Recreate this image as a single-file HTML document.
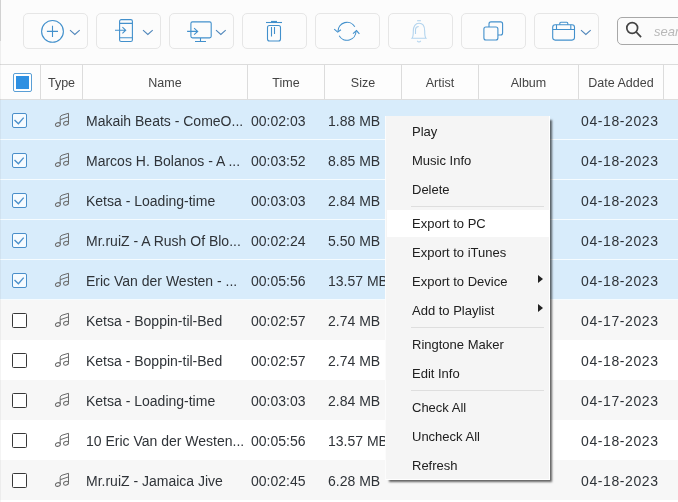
<!DOCTYPE html>
<html><head><meta charset="utf-8">
<style>
html,body{margin:0;padding:0;}
body{width:678px;height:502px;overflow:hidden;position:relative;background:#fff;font-family:"Liberation Sans",sans-serif;}
.tb{position:absolute;left:0;top:0;width:678px;height:64px;background:#fcfcfc;}
.edge{position:absolute;left:0;top:0;width:1px;height:41px;background:#d2d2d2;}.edge2{position:absolute;left:0;top:41px;width:1px;height:23px;background:#eeeeee;}
.btn{position:absolute;top:13px;width:65px;height:36px;border:1px solid #e6e6e6;border-radius:5px;background:#fcfcfc;box-sizing:border-box;}
.btn svg{position:absolute;left:-2px;top:-2px;}
.search{position:absolute;left:617px;top:17px;width:80px;height:28px;border:1px solid #a8a8a8;border-radius:5px;background:#fbfbfb;box-sizing:border-box;}
.search span{position:absolute;left:36px;top:6px;font-size:13px;font-style:italic;color:#b8b8b8;}
.hdr{position:absolute;left:0;top:64px;width:678px;height:36px;background:#fdfdfd;border-top:1px solid #dcdcdc;border-bottom:1px solid #dedede;box-sizing:border-box;}
.hc{position:absolute;top:0;height:34px;line-height:36px;text-align:center;font-size:12.5px;color:#444;border-right:1px solid #dcdcdc;box-sizing:border-box;}
.row{position:absolute;left:0;width:678px;height:40px;}
.sel{background:#d8ecfb;border-bottom:1px solid #f6fcff;box-sizing:border-box;}
.gry{background:#f7f7f7;}
.wht{background:#fff;}
.c{position:absolute;top:1px;height:40px;line-height:40px;font-size:14px;color:#2f3338;white-space:nowrap;overflow:hidden;}
.cb{position:absolute;left:12px;top:13px;width:15px;height:15px;box-sizing:border-box;border-radius:2px;}
.cbs{border:1.3px solid #4a8fca;background:#f5fbff;}
.cbu{border:1.4px solid #383838;background:#fff;border-radius:1.5px;}
.cb svg{position:absolute;left:-1.3px;top:-1.3px;}
.note{position:absolute;left:54px;top:12px;}
.menu{position:absolute;left:385px;top:116px;width:165px;height:364px;background:#f5f5f5;border-left:1px solid #fcfcfc;border-right:1px solid #fff;border-bottom:1px solid #fff;box-sizing:border-box;box-shadow:3px 3px 2px -1px rgba(0,0,0,0.6);}
.hlb{position:absolute;left:1px;top:94px;width:162px;height:27px;background:#fff;}
.mi{position:absolute;left:-1px;width:165px;height:29px;line-height:29px;font-size:13px;color:#202020;}
.mi span{position:absolute;left:27px;top:0;}
.mi.hl{background:#fff;}
.sep{position:absolute;left:25px;width:133px;height:1px;background:#dedede;}
.arr{position:absolute;left:153px;top:8.7px;width:0;height:0;border-left:5.2px solid #222;border-top:4.8px solid transparent;border-bottom:4.8px solid transparent;}
.tb,.hdr,.row,.menu{will-change:transform;}</style></head><body>
<div class="tb">
  <div class="edge"></div><div class="edge2"></div>
  <div class="btn" style="left:23px;"><svg width="65" height="36" viewBox="0 0 65 36"><g fill="none" stroke="#4290cc" stroke-width="1.1"><circle cx="30.5" cy="19.4" r="10.9"/><path d="M24.9 19.4H36M30.5 13.8V25"/><path d="M48 18.2l4.85 4.2 4.85-4.2" stroke="#4f86bb"/></g></svg></div>
  <div class="btn" style="left:96px;"><svg width="65" height="36" viewBox="0 0 65 36"><g fill="none" stroke="#4290cc" stroke-width="1.1"><rect x="24.6" y="7.6" width="12.8" height="21.9" rx="1.6"/><path d="M24.6 11.4h12.8M24.6 25.8h12.8"/><path d="M20 18.2h10.9M27.4 15.2l3.3 3 -3.3 3.2"/><path d="M48 18.2l4.85 4.2 4.85-4.2" stroke="#4f86bb"/></g></svg></div>
  <div class="btn" style="left:169px;"><svg width="65" height="36" viewBox="0 0 65 36"><g fill="none" stroke="#4290cc" stroke-width="1.1"><rect x="22.9" y="9.9" width="20.3" height="16" rx="1.6"/><path d="M32.5 26v3.5M27 29.5h11"/><path d="M19.1 19.4h10.8M26.1 16.1l3.6 3.3-3.6 3.2"/><path d="M48 18.2l4.85 4.2 4.85-4.2" stroke="#4f86bb"/></g></svg></div>
  <div class="btn" style="left:242px;"><svg width="65" height="36" viewBox="0 0 65 36"><g fill="none" stroke="#4290cc" stroke-width="1.1"><path d="M25 10.5h16"/><rect x="30" y="8.9" width="6" height="1.6" fill="#4290cc" stroke="none"/><rect x="26.5" y="13.5" width="13" height="15.5" rx="2"/><path d="M30.5 15v9.5M33.5 15v7"/></g></svg></div>
  <div class="btn" style="left:315px;"><svg width="65" height="36" viewBox="0 0 65 36"><g fill="none" stroke="#4290cc" stroke-width="1.1"><path d="M40.8 14.8A9 9 0 0 0 24 19.3"/><path d="M20.2 17.1l3.5 3 3.2-2.4"/><path d="M25.2 23.8A9 9 0 0 0 42 19.3"/><path d="M39 21.6l3.5-3 2.9 3.2"/></g></svg></div>
  <div class="btn" style="left:388px;"><svg width="65" height="36" viewBox="0 0 65 36"><g fill="none" stroke="#b3d4ee" stroke-width="1.1"><path d="M30.1 8.7h3.8"/><path d="M25 26.3C26.2 25 26.3 23 26.3 19C26.3 14.2 28.5 11.3 32 11.3C35.5 11.3 37.7 14.2 37.7 19C37.7 23 37.8 25 39 26.3Z"/><path d="M28.5 22.1V17.5C28.5 16 29.8 14.7 31.7 14.5"/><path d="M30.2 28.9Q32 31.2 33.8 28.9"/></g></svg></div>
  <div class="btn" style="left:461px;"><svg width="65" height="36" viewBox="0 0 65 36"><g fill="none" stroke="#4290cc" stroke-width="1.1"><rect x="23.9" y="15" width="14" height="13" rx="2"/><path d="M29 15V11.9a2 2 0 0 1 2-2h9.6a2 2 0 0 1 2 2V21a2 2 0 0 1-2 2H38"/></g></svg></div>
  <div class="btn" style="left:534px;"><svg width="65" height="36" viewBox="0 0 65 36"><g fill="none" stroke="#4290cc" stroke-width="1.1"><rect x="19.7" y="12.7" width="21.8" height="15.4" rx="2.5"/><path d="M19.7 17.5h21.8M23.5 12.7v4.8M37.8 12.7v4.8"/><path d="M26.8 12.7V11.2a1 1 0 0 1 1-1h6a1 1 0 0 1 1 1v1.5"/><path d="M48 18.2l4.85 4.2 4.85-4.2" stroke="#4f86bb"/></g></svg></div>
  <div class="search"><svg width="30" height="28" viewBox="0 0 30 28" style="position:absolute;left:0;top:0"><g fill="none" stroke="#444" stroke-width="1.7"><circle cx="14.2" cy="10" r="5.4"/><path d="M18.1 13.9l5 5.2"/></g></svg><span>search</span></div>
</div>
<div class="hdr">
  <div class="hc" style="left:0;width:41px;"><div class="cb" style="left:13px;top:8px;width:19px;height:19px;border:1.5px solid #5a9fd6;background:#fff;border-radius:2px"><div style="position:absolute;left:1.5px;top:1.5px;width:13px;height:13px;background:#2e90e2"></div></div></div>
  <div class="hc" style="left:41px;width:42px;">Type</div>
  <div class="hc" style="left:83px;width:165px;">Name</div>
  <div class="hc" style="left:248px;width:77px;">Time</div>
  <div class="hc" style="left:325px;width:77px;">Size</div>
  <div class="hc" style="left:402px;width:77px;">Artist</div>
  <div class="hc" style="left:479px;width:100px;">Album</div>
  <div class="hc" style="left:579px;width:85px;">Date Added</div>
</div>
<div id="rows">
<div class="row sel" style="top:100px"><div class="cb cbs"><svg width="15" height="15" viewBox="0 0 15 15"><path d="M2.5 7L6.4 10.8L11.7 4.6" fill="none" stroke="#4a8fca" stroke-width="1.4"/></svg></div><svg class="note" width="16" height="16" viewBox="0 0 16 16"><g fill="none" stroke="#6a6a6a" stroke-width="1"><ellipse cx="3.9" cy="12.5" rx="2.5" ry="1.75" transform="rotate(-15 3.9 12.5)"/><ellipse cx="12" cy="11.3" rx="2.5" ry="1.85" transform="rotate(-15 12 11.3)"/><path d="M6.2 12V5.6Q6.2 3.7 8.1 3.2L14.5 1.3V11.3"/><path d="M6.2 7.7L14.5 4.9"/></g></svg><div class="c" style="left:86px;width:160px">Makaih Beats - ComeO...</div><div class="c" style="left:251px">00:02:03</div><div class="c" style="left:328px">1.88 MB</div><div class="c" style="left:581px;letter-spacing:0.6px">04-18-2023</div></div>
<div class="row sel" style="top:140px"><div class="cb cbs"><svg width="15" height="15" viewBox="0 0 15 15"><path d="M2.5 7L6.4 10.8L11.7 4.6" fill="none" stroke="#4a8fca" stroke-width="1.4"/></svg></div><svg class="note" width="16" height="16" viewBox="0 0 16 16"><g fill="none" stroke="#6a6a6a" stroke-width="1"><ellipse cx="3.9" cy="12.5" rx="2.5" ry="1.75" transform="rotate(-15 3.9 12.5)"/><ellipse cx="12" cy="11.3" rx="2.5" ry="1.85" transform="rotate(-15 12 11.3)"/><path d="M6.2 12V5.6Q6.2 3.7 8.1 3.2L14.5 1.3V11.3"/><path d="M6.2 7.7L14.5 4.9"/></g></svg><div class="c" style="left:86px;width:160px">Marcos H. Bolanos - A ...</div><div class="c" style="left:251px">00:03:52</div><div class="c" style="left:328px">8.85 MB</div><div class="c" style="left:581px;letter-spacing:0.6px">04-18-2023</div></div>
<div class="row sel" style="top:180px"><div class="cb cbs"><svg width="15" height="15" viewBox="0 0 15 15"><path d="M2.5 7L6.4 10.8L11.7 4.6" fill="none" stroke="#4a8fca" stroke-width="1.4"/></svg></div><svg class="note" width="16" height="16" viewBox="0 0 16 16"><g fill="none" stroke="#6a6a6a" stroke-width="1"><ellipse cx="3.9" cy="12.5" rx="2.5" ry="1.75" transform="rotate(-15 3.9 12.5)"/><ellipse cx="12" cy="11.3" rx="2.5" ry="1.85" transform="rotate(-15 12 11.3)"/><path d="M6.2 12V5.6Q6.2 3.7 8.1 3.2L14.5 1.3V11.3"/><path d="M6.2 7.7L14.5 4.9"/></g></svg><div class="c" style="left:86px;width:160px">Ketsa - Loading-time</div><div class="c" style="left:251px">00:03:03</div><div class="c" style="left:328px">2.84 MB</div><div class="c" style="left:581px;letter-spacing:0.6px">04-18-2023</div></div>
<div class="row sel" style="top:220px"><div class="cb cbs"><svg width="15" height="15" viewBox="0 0 15 15"><path d="M2.5 7L6.4 10.8L11.7 4.6" fill="none" stroke="#4a8fca" stroke-width="1.4"/></svg></div><svg class="note" width="16" height="16" viewBox="0 0 16 16"><g fill="none" stroke="#6a6a6a" stroke-width="1"><ellipse cx="3.9" cy="12.5" rx="2.5" ry="1.75" transform="rotate(-15 3.9 12.5)"/><ellipse cx="12" cy="11.3" rx="2.5" ry="1.85" transform="rotate(-15 12 11.3)"/><path d="M6.2 12V5.6Q6.2 3.7 8.1 3.2L14.5 1.3V11.3"/><path d="M6.2 7.7L14.5 4.9"/></g></svg><div class="c" style="left:86px;width:160px">Mr.ruiZ - A Rush Of Blo...</div><div class="c" style="left:251px">00:02:24</div><div class="c" style="left:328px">5.50 MB</div><div class="c" style="left:581px;letter-spacing:0.6px">04-18-2023</div></div>
<div class="row sel" style="top:260px"><div class="cb cbs"><svg width="15" height="15" viewBox="0 0 15 15"><path d="M2.5 7L6.4 10.8L11.7 4.6" fill="none" stroke="#4a8fca" stroke-width="1.4"/></svg></div><svg class="note" width="16" height="16" viewBox="0 0 16 16"><g fill="none" stroke="#6a6a6a" stroke-width="1"><ellipse cx="3.9" cy="12.5" rx="2.5" ry="1.75" transform="rotate(-15 3.9 12.5)"/><ellipse cx="12" cy="11.3" rx="2.5" ry="1.85" transform="rotate(-15 12 11.3)"/><path d="M6.2 12V5.6Q6.2 3.7 8.1 3.2L14.5 1.3V11.3"/><path d="M6.2 7.7L14.5 4.9"/></g></svg><div class="c" style="left:86px;width:160px">Eric Van der Westen - ...</div><div class="c" style="left:251px">00:05:56</div><div class="c" style="left:328px">13.57 MB</div><div class="c" style="left:581px;letter-spacing:0.6px">04-18-2023</div></div>
<div class="row gry" style="top:300px"><div class="cb cbu"></div><svg class="note" width="16" height="16" viewBox="0 0 16 16"><g fill="none" stroke="#6a6a6a" stroke-width="1"><ellipse cx="3.9" cy="12.5" rx="2.5" ry="1.75" transform="rotate(-15 3.9 12.5)"/><ellipse cx="12" cy="11.3" rx="2.5" ry="1.85" transform="rotate(-15 12 11.3)"/><path d="M6.2 12V5.6Q6.2 3.7 8.1 3.2L14.5 1.3V11.3"/><path d="M6.2 7.7L14.5 4.9"/></g></svg><div class="c" style="left:86px;width:160px">Ketsa - Boppin-til-Bed</div><div class="c" style="left:251px">00:02:57</div><div class="c" style="left:328px">2.74 MB</div><div class="c" style="left:581px;letter-spacing:0.6px">04-17-2023</div></div>
<div class="row wht" style="top:340px"><div class="cb cbu"></div><svg class="note" width="16" height="16" viewBox="0 0 16 16"><g fill="none" stroke="#6a6a6a" stroke-width="1"><ellipse cx="3.9" cy="12.5" rx="2.5" ry="1.75" transform="rotate(-15 3.9 12.5)"/><ellipse cx="12" cy="11.3" rx="2.5" ry="1.85" transform="rotate(-15 12 11.3)"/><path d="M6.2 12V5.6Q6.2 3.7 8.1 3.2L14.5 1.3V11.3"/><path d="M6.2 7.7L14.5 4.9"/></g></svg><div class="c" style="left:86px;width:160px">Ketsa - Boppin-til-Bed</div><div class="c" style="left:251px">00:02:57</div><div class="c" style="left:328px">2.74 MB</div><div class="c" style="left:581px;letter-spacing:0.6px">04-18-2023</div></div>
<div class="row gry" style="top:380px"><div class="cb cbu"></div><svg class="note" width="16" height="16" viewBox="0 0 16 16"><g fill="none" stroke="#6a6a6a" stroke-width="1"><ellipse cx="3.9" cy="12.5" rx="2.5" ry="1.75" transform="rotate(-15 3.9 12.5)"/><ellipse cx="12" cy="11.3" rx="2.5" ry="1.85" transform="rotate(-15 12 11.3)"/><path d="M6.2 12V5.6Q6.2 3.7 8.1 3.2L14.5 1.3V11.3"/><path d="M6.2 7.7L14.5 4.9"/></g></svg><div class="c" style="left:86px;width:160px">Ketsa - Loading-time</div><div class="c" style="left:251px">00:03:03</div><div class="c" style="left:328px">2.84 MB</div><div class="c" style="left:581px;letter-spacing:0.6px">04-17-2023</div></div>
<div class="row wht" style="top:420px"><div class="cb cbu"></div><svg class="note" width="16" height="16" viewBox="0 0 16 16"><g fill="none" stroke="#6a6a6a" stroke-width="1"><ellipse cx="3.9" cy="12.5" rx="2.5" ry="1.75" transform="rotate(-15 3.9 12.5)"/><ellipse cx="12" cy="11.3" rx="2.5" ry="1.85" transform="rotate(-15 12 11.3)"/><path d="M6.2 12V5.6Q6.2 3.7 8.1 3.2L14.5 1.3V11.3"/><path d="M6.2 7.7L14.5 4.9"/></g></svg><div class="c" style="left:86px;width:160px">10 Eric Van der Westen...</div><div class="c" style="left:251px">00:05:56</div><div class="c" style="left:328px">13.57 MB</div><div class="c" style="left:581px;letter-spacing:0.6px">04-18-2023</div></div>
<div class="row gry" style="top:460px"><div class="cb cbu"></div><svg class="note" width="16" height="16" viewBox="0 0 16 16"><g fill="none" stroke="#6a6a6a" stroke-width="1"><ellipse cx="3.9" cy="12.5" rx="2.5" ry="1.75" transform="rotate(-15 3.9 12.5)"/><ellipse cx="12" cy="11.3" rx="2.5" ry="1.85" transform="rotate(-15 12 11.3)"/><path d="M6.2 12V5.6Q6.2 3.7 8.1 3.2L14.5 1.3V11.3"/><path d="M6.2 7.7L14.5 4.9"/></g></svg><div class="c" style="left:86px;width:160px">Mr.ruiZ - Jamaica Jive</div><div class="c" style="left:251px">00:02:45</div><div class="c" style="left:328px">6.28 MB</div><div class="c" style="left:581px;letter-spacing:0.6px">04-18-2023</div></div>
</div>
<div class="menu">
  <div class="hlb"></div>
  <div class="mi" style="top:1px"><span>Play</span></div>
  <div class="mi" style="top:30px"><span>Music Info</span></div>
  <div class="mi" style="top:59px"><span>Delete</span></div>
  <div class="sep" style="top:90px"></div>
  <div class="mi" style="top:92.6px"><span>Export to PC</span></div>
  <div class="mi" style="top:121.8px"><span>Export to iTunes</span></div>
  <div class="mi" style="top:150.8px"><span>Export to Device</span><div class="arr"></div></div>
  <div class="mi" style="top:179.8px"><span>Add to Playlist</span><div class="arr"></div></div>
  <div class="sep" style="top:211px"></div>
  <div class="mi" style="top:214px"><span>Ringtone Maker</span></div>
  <div class="mi" style="top:243px"><span>Edit Info</span></div>
  <div class="sep" style="top:274px"></div>
  <div class="mi" style="top:277px"><span>Check All</span></div>
  <div class="mi" style="top:306px"><span>Uncheck All</span></div>
  <div class="mi" style="top:335px"><span>Refresh</span></div>
</div>
<div style="position:absolute;left:0;top:64px;width:1px;height:438px;background:rgba(120,120,120,0.08)"></div>
</body></html>
